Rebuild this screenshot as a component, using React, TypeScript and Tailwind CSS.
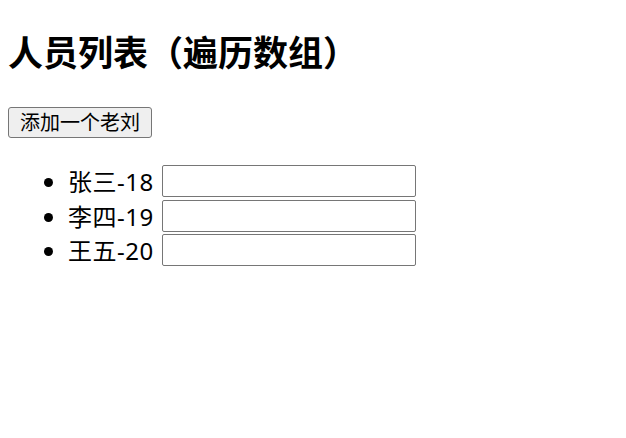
const people = [
  { id: 1, name: '张三', age: 18 },
  { id: 2, name: '李四', age: 19 },
  { id: 3, name: '王五', age: 20 },
];

function App() {
  return (
    <div className="min-h-[438px] bg-white px-2 text-black font-['Noto_Sans','Noto_Sans_CJK_SC',sans-serif] [text-spacing-trim:space-all]">
      <h1 className="pt-[29px] text-[35px] font-bold leading-[48px]">人员列表（遍历数组）</h1>

      <button
        type="button"
        className="mt-[30px] h-[31px] rounded-[3px] border border-[#767676] bg-[#efefef] px-[11px] text-[20px] leading-none"
      >
        添加一个老刘
      </button>

      <ul className="mt-[27px] list-disc pl-[60px] text-[24px]">
        {people.map((p) => (
          <li key={p.id} className="h-[34.5px] leading-[34px]">
            <span className="tracking-[0.5px]">
              {p.name}-{p.age}
            </span>{' '}
            <input
              type="text"
              className="ml-[2px] h-[32px] w-[254px] rounded-[2px] border border-[#767676] bg-white align-top"
            />
          </li>
        ))}
      </ul>
    </div>
  );
}

export default App;
